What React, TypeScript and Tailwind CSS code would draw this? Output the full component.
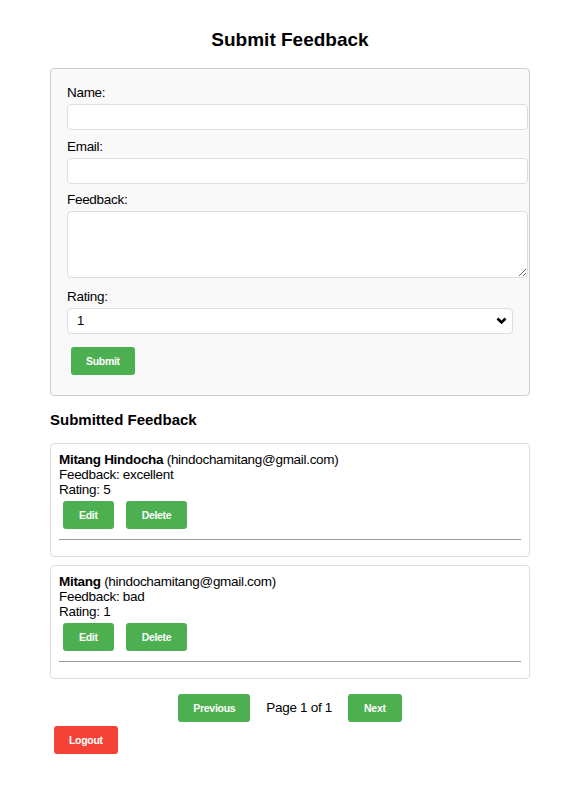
const entries = [
  { name: "Mitang Hindocha", email: "hindochamitang@gmail.com", feedback: "excellent", rating: 5 },
  { name: "Mitang", email: "hindochamitang@gmail.com", feedback: "bad", rating: 1 },
];

const btn =
  "h-[28px] rounded-[3px] bg-[#4CAF50] text-white text-[10.5px] font-bold leading-none tracking-[-0.3px]";

function Field({ label, children, className }: { label: string; children: React.ReactNode; className?: string }) {
  return (
    <div className={className}>
      <label className="block leading-[15px]">{label}</label>
      {children}
    </div>
  );
}

export default function App() {
  return (
    <div className="min-h-screen bg-white text-[13.5px] tracking-[-0.3px] text-black font-['Liberation_Sans',Arial,sans-serif]">
      <div className="ml-[50px] w-[480px] pt-[29px]">
        <h2 className="text-center text-[19px] font-bold leading-[22px] tracking-normal">Submit Feedback</h2>

        <form className="mt-[17px] rounded-[4px] border border-[#ccc] bg-[#f9f9f9] px-4 pt-4 pb-[20px]">
          <Field label="Name:">
            <input className="mt-[4px] block h-[26px] w-[461px] rounded-[4px] border border-[#ddd] bg-white px-2" />
          </Field>
          <Field label="Email:" className="mt-[9px]">
            <input className="mt-[4px] block h-[26px] w-[461px] rounded-[4px] border border-[#ddd] bg-white px-2" />
          </Field>
          <Field label="Feedback:" className="mt-[8px]">
            <textarea className="mt-[4px] block h-[67px] w-[461px] rounded-[4px] border border-[#ddd] bg-white px-2" />
          </Field>
          <Field label="Rating:" className="mt-[11px]">
            <div className="relative mt-[4px] w-[446px]">
              <select className="block h-[26px] w-full appearance-none rounded-[4px] border border-[#ddd] bg-white pl-[9px] text-[13px] tracking-normal">
                <option>1</option>
                <option>2</option>
                <option>3</option>
                <option>4</option>
                <option>5</option>
              </select>
              <svg
                className="pointer-events-none absolute right-[6px] top-[9px]"
                width="11"
                height="8"
                viewBox="0 0 11 8"
              >
                <polyline points="1.5,1.5 5.5,5.5 9.5,1.5" fill="none" stroke="#000" strokeWidth="2.6" />
              </svg>
            </div>
          </Field>
          <button type="button" className={`${btn} mt-[13px] ml-[4px] px-[15px] block`}>
            Submit
          </button>
        </form>

        <h3 className="mt-[15px] mb-[14px] text-[15px] font-bold leading-[18px] tracking-normal">Submitted Feedback</h3>

        {entries.map((e, i) => (
          <div key={i} className="mb-[8px] rounded-[4px] border border-[#ddd] p-[8px]">
            <div className="leading-[15px]">
              <strong>{e.name}</strong> ({e.email})
            </div>
            <div className="leading-[15px]">Feedback: {e.feedback}</div>
            <div className="leading-[15px]">Rating: {e.rating}</div>
            <div className="mt-[4px] ml-[4px] flex gap-[12px]">
              <button type="button" className={`${btn} px-[16px]`}>Edit</button>
              <button type="button" className={`${btn} px-[16px]`}>Delete</button>
            </div>
            <hr className="mt-[10px] mb-[8px] border-t border-[#999]" />
          </div>
        ))}

        <div className="mt-[15px] flex items-center justify-center gap-[16px]">
          <button type="button" className={`${btn} px-[15px]`}>Previous</button>
          <span>Page 1 of 1</span>
          <button type="button" className={`${btn} px-[16px]`}>Next</button>
        </div>

        <button
          type="button"
          className="mt-[4px] ml-[4px] h-[28px] rounded-[3px] bg-[#f44336] px-[15px] text-[10.5px] font-bold leading-none tracking-[-0.3px] text-white"
        >
          Logout
        </button>
      </div>
    </div>
  );
}
